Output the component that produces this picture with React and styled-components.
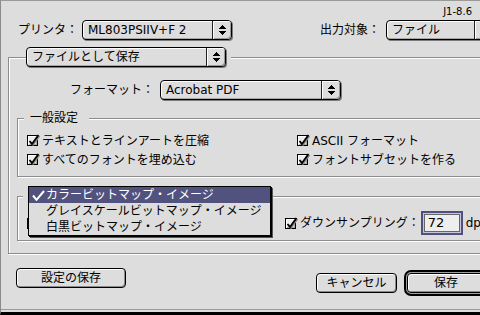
import React from 'react';
import styled, { createGlobalStyle } from 'styled-components';

const GlobalStyle = createGlobalStyle`
  html, body { margin: 0; padding: 0; background: #dddddd; }
  body {
    font-family: "DejaVu Sans", "Noto Sans CJK JP", sans-serif;
    font-size: 12px;
    color: #000;
  }
`;

const Window = styled.div`
  position: relative;
  width: 480px;
  height: 315px;
  box-sizing: border-box;
  overflow: hidden;
  background: #dddddd;
  border-top: 1px solid #9a9a9a;
  border-left: 1px solid #8a8a8a;
  border-bottom: 3px solid #000;
`;

const Frame = styled.div`
  height: 309px;
  box-sizing: border-box;
  border-bottom: 1px solid #9a9a9a;
  display: flex;
  flex-direction: column;
`;

const VersionRow = styled.div`
  height: 14px;
  margin-top: 4px;
  padding-right: 8px;
  display: flex;
  justify-content: flex-end;
  align-items: center;
  font-size: 10px;
  line-height: 14px;
`;

const TopRow = styled.div`
  display: flex;
  align-items: center;
  height: 20px;
  margin-top: 1px;
  padding-left: 17px;
`;

const Label = styled.span`
  white-space: nowrap;
  line-height: 20px;
  margin-left: ${p => p.$ml || 0}px;
  margin-right: ${p => (p.$mr == null ? 4 : p.$mr)}px;
  flex-shrink: 0;
`;

const PopupBox = styled.div`
  display: flex;
  align-items: stretch;
  width: ${p => p.$w}px;
  height: 20px;
  box-sizing: border-box;
  border: 1px solid #000;
  border-radius: 4px;
  background: #dddddd;
  box-shadow: inset 1px 1px 0 #fff, inset -1px -1px 0 #a8a8a8, 1px 1px 0 #7a7a7a;
  flex-shrink: 0;
`;

const PopupText = styled.span`
  flex: 1;
  padding-left: 5px;
  line-height: 18px;
  white-space: nowrap;
  overflow: hidden;
`;

const PopupArrow = styled.span`
  width: 18px;
  flex-shrink: 0;
  border-left: 1px solid #222;
  border-radius: 0 3px 3px 0;
  display: flex;
  align-items: center;
  justify-content: center;
  box-shadow: inset 1px 1px 0 #fff, inset -1px -1px 0 #999;
`;

const Group = styled.div`
  position: relative;
  box-sizing: border-box;
  width: ${p => p.$w}px;
  height: ${p => p.$h}px;
  margin: ${p => p.$m};
  border: 1px solid #8c8c8c;
  box-shadow: inset 1px 1px 0 #fff, 1px 1px 0 #fff;
  display: flex;
  flex-direction: column;
  flex-shrink: 0;
`;

const Legend = styled.div`
  position: absolute;
  top: ${p => p.$top}px;
  left: ${p => p.$left}px;
  padding: ${p => p.$pad};
  background: #dddddd;
  display: flex;
  line-height: 16px;
  white-space: nowrap;
`;

const FormatRow = styled.div`
  display: flex;
  align-items: center;
  height: 20px;
  margin-top: 22px;
  padding-left: 61px;
`;

const CheckGrid = styled.div`
  display: grid;
  grid-template-columns: ${p => p.$col}px auto;
  grid-auto-rows: ${p => p.$row}px;
  margin-top: ${p => p.$mt}px;
  padding-left: 9px;
  align-items: center;
`;

const CheckItem = styled.label`
  display: flex;
  align-items: center;
  white-space: nowrap;
  line-height: 16px;
`;

const Box = styled.span`
  position: relative;
  width: 11px;
  height: 11px;
  box-sizing: border-box;
  border: 1px solid #000;
  background: #ececec;
  box-shadow: inset 1px 1px 0 #fff, inset -1px -1px 0 #aaa;
  margin-right: 4px;
  flex-shrink: 0;
`;

const CheckSvg = styled.svg`
  position: absolute;
  left: -1px;
  top: -3px;
  overflow: visible;
`;

const Field = styled.div`
  box-sizing: border-box;
  width: 42px;
  height: 24px;
  margin-left: 1px;
  border: 2px solid #51517f;
  box-shadow: inset 0 0 0 1px #c8c8d4, inset 0 0 0 2px #666;
  background: #eeeeee;
  padding-left: 5px;
  line-height: 20px;
  font-size: 13px;
`;

const Unit = styled.span`
  margin-left: 3px;
  white-space: nowrap;
`;

const ButtonBar = styled.div`
  display: flex;
  align-items: flex-start;
  margin-top: 14px;
  padding-left: 15px;
`;

const Button = styled.div`
  box-sizing: border-box;
  width: ${p => p.$w}px;
  height: 20px;
  margin-left: ${p => p.$ml || 0}px;
  margin-top: ${p => p.$mt || 0}px;
  line-height: 18px;
  text-align: center;
  background: #dddddd;
  border: 1px solid #000;
  border-radius: 4px;
  box-shadow: inset 1px 1px 0 #fff, inset -1px -1px 0 #8a8a8a;
  flex-shrink: 0;
`;

const DefaultRing = styled.div`
  margin-left: ${p => p.$ml}px;
  margin-top: ${p => p.$mt}px;
  border: 2px solid #000;
  border-radius: 7px;
  padding: 1px;
  background: #a0a0a0;
  flex-shrink: 0;
  display: flex;
`;

const Menu = styled.div`
  position: absolute;
  left: 27px;
  top: 185px;
  width: 243px;
  box-sizing: border-box;
  border: 1px solid #000;
  background: #dddddd;
  box-shadow: 1px 1px 0 #000, 2px 2px 0 #555;
`;

const MenuItem = styled.div`
  display: flex;
  align-items: center;
  height: 16px;
  line-height: 16px;
  white-space: nowrap;
  background: ${p => (p.$active ? '#52527f' : 'transparent')};
  color: ${p => (p.$active ? '#fff' : '#000')};
`;

const MarkSlot = styled.span`
  width: 17px;
  display: flex;
  justify-content: center;
  padding-left: 2px;
  box-sizing: border-box;
  flex-shrink: 0;
`;

const Arrows = () => (
  <svg width="7" height="10" viewBox="0 0 7 10" shapeRendering="crispEdges">
    <rect x="3" y="0" width="1" height="1" />
    <rect x="2" y="1" width="3" height="1" />
    <rect x="1" y="2" width="5" height="1" />
    <rect x="0" y="3" width="7" height="1" />
    <rect x="0" y="6" width="7" height="1" />
    <rect x="1" y="7" width="5" height="1" />
    <rect x="2" y="8" width="3" height="1" />
    <rect x="3" y="9" width="1" height="1" />
  </svg>
);

const Popup = ({ w, children }) => (
  <PopupBox $w={w}>
    <PopupText>{children}</PopupText>
    <PopupArrow><Arrows /></PopupArrow>
  </PopupBox>
);

const Checkbox = ({ checked }) => (
  <Box>
    {checked && (
      <CheckSvg width="14" height="14" viewBox="0 0 14 14">
        <path d="M3.5 9 L6 12 L12.5 3" fill="none" stroke="#888" strokeWidth="1.6" />
        <path d="M2.5 8 L5 11 L11.5 2" fill="none" stroke="#000" strokeWidth="1.8" />
      </CheckSvg>
    )}
  </Box>
);

const Check = ({ children, checked = true }) => (
  <CheckItem>
    <Checkbox checked={checked} />
    {children}
  </CheckItem>
);

const MenuCheck = () => (
  <svg width="13" height="11" viewBox="0 0 13 11">
    <path d="M1 5.5 L4.5 9.8 L12 1" fill="none" stroke="#fff" strokeWidth="2" />
  </svg>
);

export default function App() {
  return (
    <>
      <GlobalStyle />
      <Window>
        <Frame>
          <VersionRow>J1-8.6</VersionRow>
          <TopRow>
            <Label>プリンタ：</Label>
            <Popup w={150}>ML803PSIIV+F 2</Popup>
            <Label $ml={88} $mr={6}>出力対象：</Label>
            <Popup w={108}>ファイル</Popup>
          </TopRow>

          <Group $w={520} $h={197} $m="17px 0 0 7px">
            <Legend $top={-11} $left={17} $pad="0 5px 0 0">
              <Popup w={200}>ファイルとして保存</Popup>
            </Legend>

            <FormatRow>
              <Label $mr={6}>フォーマット：</Label>
              <Popup w={181}>Acrobat PDF</Popup>
            </FormatRow>

            <Group $w={500} $h={59} $m="18px 0 0 8px">
              <Legend $top={-9} $left={6} $pad="0 11px 0 6px">一般設定</Legend>
              <CheckGrid $col={270} $row={19} $mt={12}>
                <Check>テキストとラインアートを圧縮</Check>
                <Check>ASCII フォーマット</Check>
                <Check>すべてのフォントを埋め込む</Check>
                <Check>フォントサブセットを作る</Check>
              </CheckGrid>
            </Group>

            <Group $w={500} $h={45} $m="19px 0 0 8px">
              <Legend $top={-11} $left={5} $pad="0 4px 0 5px">
                <Popup w={200} />
              </Legend>
              <CheckGrid $col={258} $row={24} $mt={14}>
                <Check />
                <CheckItem>
                  <Checkbox checked />
                  ダウンサンプリング：
                  <Field>72</Field>
                  <Unit>dpi</Unit>
                </CheckItem>
              </CheckGrid>
            </Group>
          </Group>

          <ButtonBar>
            <Button $w={110}>設定の保存</Button>
            <Button $w={81} $ml={190} $mt={5}>キャンセル</Button>
            <DefaultRing $ml={7} $mt={2}>
              <Button $w={78}>保存</Button>
            </DefaultRing>
          </ButtonBar>
        </Frame>

        <Menu>
          <MenuItem $active>
            <MarkSlot><MenuCheck /></MarkSlot>
            カラービットマップ・イメージ
          </MenuItem>
          <MenuItem>
            <MarkSlot />
            グレイスケールビットマップ・イメージ
          </MenuItem>
          <MenuItem>
            <MarkSlot />
            白黒ビットマップ・イメージ
          </MenuItem>
        </Menu>
      </Window>
    </>
  );
}
